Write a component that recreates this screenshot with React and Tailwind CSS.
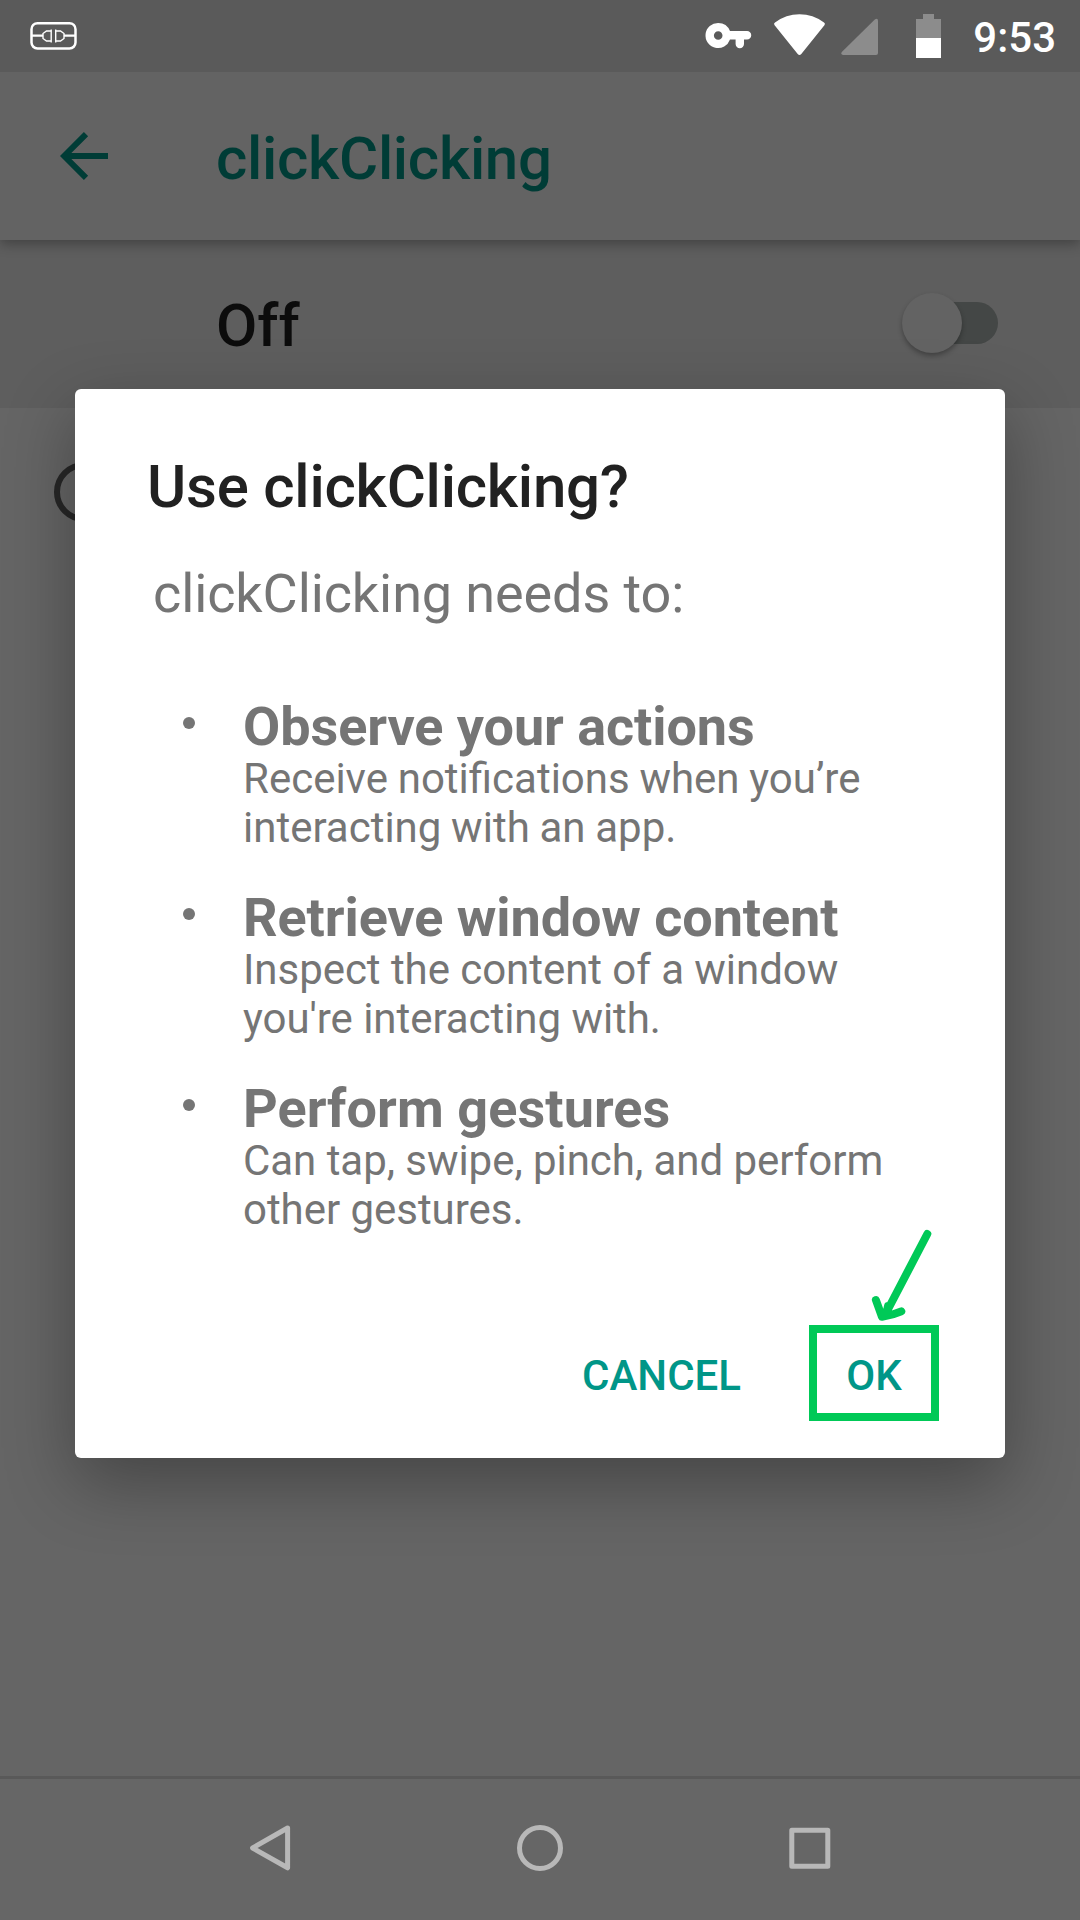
const permissions = [
  {
    title: "Observe your actions",
    tracking: "tracking-[-0.07px]",
    lineSpacing: "[word-spacing:-0.7px]",
    lines: ["Receive notifications when you’re", "interacting with an app."],
  },
  {
    title: "Retrieve window content",
    tracking: "tracking-[-0.09px]",
    lineSpacing: "tracking-[-0.05px]",
    lines: ["Inspect the content of a window", "you're interacting with."],
  },
  {
    title: "Perform gestures",
    tracking: "tracking-[0.08px]",
    lineSpacing: "tracking-[-0.04px]",
    lines: ["Can tap, swipe, pinch, and perform", "other gestures."],
  },
];

function StatusBar() {
  return (
    <div className="relative z-20 flex h-[72px] shrink-0 items-start bg-[#5a5a5a] text-white">
      <svg className="ml-[28px] mt-[20px]" width="52" height="32" viewBox="28 20 52 32" fill="none" stroke="currentColor">
        <rect x="31.5" y="23.2" width="44" height="25.3" rx="6" strokeWidth="2.5" />
        <path d="M32 35.7H43M64 35.7H75" strokeWidth="2.3" />
        <path d="M51 31H46.5L43 33.5V38.5L46.5 41H51M51.2 29.5V42.5M55.7 29.5V42.5M56 31H60.5L64 33.5V38.5L60.5 41H56" strokeWidth="1.4" />
      </svg>
      <div className="grow" />
      <svg width="240" height="60" viewBox="704 0 240 60">
        <path
          fill="currentColor"
          fillRule="evenodd"
          d="M718.2 22.9a12.6 12.6 0 0 1 11.8 8.2H747a4.2 4.2 0 0 1 0 8.5H744V44a4.2 4.2 0 0 1-8.4 0V39.6H730A12.6 12.6 0 1 1 718.2 22.9ZM718.2 31.2a4.3 4.3 0 1 0 0 8.6a4.3 4.3 0 1 0 0-8.6Z"
        />
        <path fill="currentColor" d="M774.6 25.3Q773.2 23.6 775 22.4Q786 14.2 799.5 14.2T824 22.4Q825.8 23.6 824.4 25.3L801.3 54Q799.5 56 797.7 54Z" />
        <path fill="#8c8c8c" d="M841.8 52.1L874.8 19.4Q878 17.5 878 21V53Q878 55 876 55H843Q840.3 54.5 841.8 52.1Z" />
        <path fill="#8c8c8c" d="M923 14H934V19H941V38H916V19H923Z" />
        <path fill="currentColor" d="M916 38H941V58H916Z" />
      </svg>
      <span className="ml-[29px] mr-[24px] mt-[13px] text-[42px] font-medium leading-[49px]">9:53</span>
    </div>
  );
}

function AppBar() {
  return (
    <header className="relative z-10 flex h-[168px] shrink-0 items-center bg-[#636363] pl-[60px] text-[#003c36] shadow-[0_4px_12px_rgba(0,0,0,0.3)]">
      <svg width="48" height="48" viewBox="0 0 48 48" fill="none" stroke="currentColor" strokeWidth="6">
        <path d="M48 24H6M26 2.2L4.2 24L26 45.8" />
      </svg>
      <h1 className="ml-[108px] pt-[5px] text-[60px] font-medium leading-[70px] tracking-[-0.3px]">clickClicking</h1>
    </header>
  );
}

function SwitchRow() {
  return (
    <div className="flex h-[168px] shrink-0 items-center bg-[#5e5e5e] pb-[2px] pl-[216px] pr-[82px]">
      <span className="grow pt-[5px] text-[60px] font-medium leading-[70px] text-[#0c0c0c]">Off</span>
      <div className="flex h-[42px] w-[88px] items-center rounded-full bg-[#444746]">
        <div className="-ml-[8px] size-[60px] shrink-0 rounded-full bg-[#636363] shadow-[0_3px_5px_rgba(0,0,0,0.3)]" />
      </div>
    </div>
  );
}

function Dialog() {
  return (
    <section className="absolute left-[75px] top-[389px] flex h-[1069px] w-[930px] flex-col rounded-[6px] bg-white pt-[62px] text-[#757575] shadow-[0_24px_70px_rgba(0,0,0,0.32)]">
      <h2 className="pl-[72px] text-[60px] font-medium leading-[71px] tracking-[-0.23px] text-[#212121]">Use clickClicking?</h2>
      <p className="mt-[40px] pl-[78px] text-[54px] leading-[63px] tracking-[-0.11px]">clickClicking needs to:</p>
      <ul className="mt-[74px] flex flex-col gap-[38px] pl-[108px]">
        {permissions.map((item) => (
          <li key={item.title} className="flex">
            <span className="mt-[18px] size-3 shrink-0 rounded-full bg-[#757575]" />
            <div className="ml-[48px] whitespace-nowrap">
              <h3 className={`text-[54px] font-bold leading-[55px] ${item.tracking}`}>{item.title}</h3>
              {item.lines.map((line) => (
                <p key={line} className={`text-[42px] leading-[49px] ${item.lineSpacing}`}>{line}</p>
              ))}
            </div>
          </li>
        ))}
      </ul>
      <div className="mt-[91px] flex h-[96px] items-stretch justify-end pr-[66px] text-[42px] font-medium leading-[49px] text-[#009688]">
        <button className="mr-[68px] pt-[4px]">CANCEL</button>
        <button className="relative w-[130px] border-8 border-[#00c957] pt-[4px]">
          OK
          <svg className="absolute left-[54px] top-[-106px]" width="70" height="104" viewBox="0 0 70 104" fill="none" stroke="#00c957" strokeWidth="8" strokeLinecap="round" strokeLinejoin="round">
            <path d="M56.3 7L13.5 89M4.9 73L11 89.8Q22 88 30.3 84.3M17 79L15 88" />
          </svg>
        </button>
      </div>
    </section>
  );
}

function NavBar() {
  return (
    <nav className="flex h-[144px] shrink-0 justify-center gap-[206px] border-t-[3px] border-[#595959] bg-[#666666] pt-[42px]">
      <svg width="64" height="54" viewBox="238 1821 64 54" fill="none" stroke="#b8b8b8" strokeWidth="5" strokeLinejoin="round">
        <path d="M287.6 1828L252.6 1848L287.6 1867.8Z" />
      </svg>
      <svg width="64" height="54" viewBox="508 1821 64 54" fill="none" stroke="#b8b8b8" strokeWidth="5">
        <circle cx="540" cy="1848" r="20.5" />
      </svg>
      <svg width="64" height="54" viewBox="778 1821 64 54" fill="none" stroke="#b8b8b8" strokeWidth="5" strokeLinejoin="round">
        <rect x="791.8" y="1830.2" width="36" height="36" />
      </svg>
    </nav>
  );
}

export default function App() {
  return (
    <div className="relative flex h-[1920px] w-[1080px] flex-col overflow-hidden bg-[#656565] font-['Roboto',sans-serif]">
      <StatusBar />
      <AppBar />
      <SwitchRow />
      <main className="grow pl-[54px] pt-[54px]">
        <div className="size-[60px] rounded-full border-[6px] border-[#272727]" />
      </main>
      <NavBar />
      <Dialog />
    </div>
  );
}
